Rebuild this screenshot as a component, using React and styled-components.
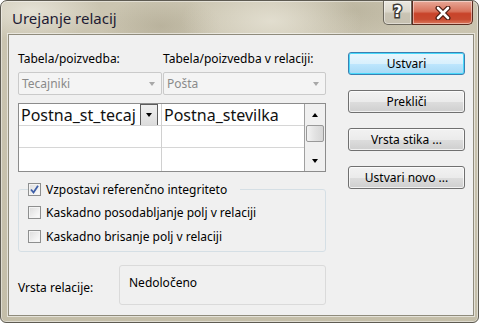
import React from "react";
import styled, { createGlobalStyle } from "styled-components";

const GlobalStyle = createGlobalStyle`
  html, body {
    margin: 0;
    padding: 0;
    background: #ffffff;
  }
  * {
    box-sizing: border-box;
  }
`;

const UI_FONT = `"Noto Sans", "Open Sans", sans-serif`;

const Window = styled.div`
  width: 479px;
  height: 323px;
  border: 1px solid #5e5b52;
  border-radius: 7px 7px 6px 6px;
  background:
    radial-gradient(ellipse 70px 30px at 30px 10px, rgba(232, 229, 218, 0.9), transparent),
    radial-gradient(ellipse 90px 40px at 270px 20px, rgba(228, 224, 210, 0.9), transparent),
    radial-gradient(ellipse 60px 30px at 160px 25px, rgba(160, 152, 128, 0.4), transparent),
    radial-gradient(ellipse 80px 30px at 350px 10px, rgba(165, 158, 134, 0.4), transparent),
    linear-gradient(#cbc5b1, #c4bea9);
  box-shadow: inset 0 0 0 1px rgba(255, 255, 255, 0.45);
  display: flex;
  flex-direction: column;
  font-family: ${UI_FONT};
  overflow: hidden;
`;

const TitleBar = styled.div`
  height: 33px;
  display: flex;
  justify-content: space-between;
  align-items: flex-start;
  padding-left: 11px;
`;

const Title = styled.div`
  margin-top: 7px;
  font-size: 15px;
  line-height: 20px;
  color: #1d1a33;
`;

const CaptionButtons = styled.div`
  display: flex;
  margin-right: 5px;
`;

const CaptionButton = styled.div`
  width: ${(p) => p.$w}px;
  height: 24px;
  display: flex;
  align-items: center;
  justify-content: center;
  border: 1px solid ${(p) => (p.$close ? "#5b2a1e" : "#6b675c")};
  border-top: none;
  border-radius: ${(p) => (p.$close ? "0 0 5px 0" : "0 0 0 5px")};
  background: ${(p) =>
    p.$close
      ? "linear-gradient(#e8a897 0%, #d8735c 45%, #c8432a 55%, #c84a30 80%, #dc7a5e 100%)"
      : "linear-gradient(#ebe8df 0%, #dcd8cc 45%, #c9c4b4 55%, #c6c0b0 100%)"};
  box-shadow: inset 0 0 0 1px rgba(255, 255, 255, 0.45);
`;

const HelpGlyph = styled.span`
  font-family: "DejaVu Sans", sans-serif;
  font-weight: bold;
  font-size: 15px;
  line-height: 15px;
  color: #ffffff;
  -webkit-text-stroke: 3px #3d3b36;
  paint-order: stroke fill;
`;

const Client = styled.div`
  margin: 0 4px 0 7px;
  height: 282px;
  border: 1px solid #8f8b7c;
  box-shadow: 0 0 0 1px rgba(255, 255, 255, 0.55);
  background: #f0f0f0;
  display: flex;
  padding: 16px 8px 0 9px;
`;

const LeftColumn = styled.div`
  width: 308px;
  display: flex;
  flex-direction: column;
`;

const LabelRow = styled.div`
  display: flex;
  height: 16px;
`;

const FieldLabel = styled.div`
  width: ${(p) => (p.$w ? `${p.$w}px` : "auto")};
  font-size: 12px;
  line-height: 16px;
  color: #000;
  white-space: nowrap;
`;

const ComboRow = styled.div`
  display: flex;
  gap: 1px;
  margin-top: 5px;
`;

const Combo = styled.div`
  width: ${(p) => p.$w}px;
  height: 23px;
  border: 1px solid #cacaca;
  border-radius: 2px;
  background: #f4f4f4;
  display: flex;
  align-items: center;
  justify-content: space-between;
  padding: 0 6px 0 3px;
  font-size: 12px;
  color: #8a8a8a;
`;

const Arrow = styled.span`
  width: 0;
  height: 0;
  border-left: 3.5px solid transparent;
  border-right: 3.5px solid transparent;
  border-${(p) => (p.$up ? "bottom" : "top")}: 4px solid ${(p) => p.$color || "#000"};
`;

const Grid = styled.div`
  margin-top: 8px;
  height: 69px;
  border: 1px solid #8c8c8c;
  background: #fff;
  display: flex;
`;

const GridColumn = styled.div`
  display: flex;
  flex-direction: column;
  border-right: 1px solid ${(p) => (p.$last ? "#a0a0a0" : "#d0d0d0")};
  flex: 0 0 143px;
`;

const GridCell = styled.div`
  height: ${(p) => (p.$fill ? "auto" : "22px")};
  flex: ${(p) => (p.$fill ? 1 : "none")};
  border-bottom: ${(p) => (p.$fill ? "none" : "1px solid #d6d6d6")};
  display: flex;
  align-items: center;
  justify-content: space-between;
  padding: 0 3px 0 2px;
  font-size: 16px;
  color: #111;
  white-space: nowrap;
  overflow: hidden;
`;

const CellDrop = styled.div`
  width: 18px;
  height: 22px;
  border: 1px solid #5c5c5c;
  background: linear-gradient(#efefef, #dcdcdc);
  display: flex;
  align-items: center;
  justify-content: center;
  flex: none;
`;

const ScrollBar = styled.div`
  flex: 1;
  background: #f0f0f0;
  display: flex;
  flex-direction: column;
  align-items: center;
  padding: 0 1px;
`;

const ScrollArrow = styled.div`
  height: 21px;
  width: 100%;
  display: flex;
  align-items: center;
  justify-content: center;
`;

const ScrollThumb = styled.div`
  width: 100%;
  height: 17px;
  border: 1px solid #999999;
  border-radius: 2px;
  background: linear-gradient(90deg, #f3f3f3, #e2e2e2 50%, #d6d6d6);
`;

const ScrollSpace = styled.div`
  flex: 1;
`;

const GroupBox = styled.fieldset`
  margin: 9px 0 0 0;
  border: 1px solid #d5dfe5;
  border-radius: 3px;
  padding: 7px 0 7px 9px;
  display: flex;
  flex-direction: column;
  gap: 8px;
`;

const Legend = styled.legend`
  padding: 0 13px 0 0;
`;

const CheckRow = styled.label`
  display: flex;
  align-items: center;
  gap: 5px;
  height: 16px;
  font-size: 12px;
  color: #000;
  white-space: nowrap;
`;

const CheckBox = styled.span`
  width: 13px;
  height: 13px;
  border: 1px solid #8e8f8f;
  background: linear-gradient(135deg, #dcdcdc, #fefefe);
  box-shadow: inset 0 0 0 1px #f4f4f4;
  display: flex;
  align-items: center;
  justify-content: center;
  flex: none;
`;

const RelationRow = styled.div`
  display: flex;
  align-items: center;
  margin-top: 13px;
`;

const RelationLabel = styled(FieldLabel)`
  width: 101px;
  padding-top: 5px;
`;

const RelationBox = styled.div`
  width: 207px;
  height: 40px;
  border: 1px solid #dadada;
  border-radius: 3px;
  padding: 9px 9px;
  font-size: 12px;
  line-height: 16px;
  color: #000;
`;

const ButtonColumn = styled.div`
  margin-left: 22px;
  margin-top: 1px;
  width: 117px;
  display: flex;
  flex-direction: column;
  gap: 15px;
`;

const Button = styled.div`
  height: 23px;
  border: 1px solid ${(p) => (p.$default ? "#3c7fb1" : "#707070")};
  border-radius: 3px;
  background: ${(p) =>
    p.$default
      ? "linear-gradient(#eaf6fd 0%, #d9f0fc 50%, #bee6fd 51%, #a7d9f5 100%)"
      : "linear-gradient(#f2f2f2 0%, #ebebeb 50%, #dddddd 51%, #cfcfcf 100%)"};
  box-shadow: inset 0 0 0 1px ${(p) => (p.$default ? "#48d9fb" : "rgba(255,255,255,0.7)")};
  display: flex;
  align-items: center;
  justify-content: center;
  font-size: 12px;
  color: #000;
`;

const App = () => {
  const buttons = ["Ustvari", "Prekliči", "Vrsta stika ...", "Ustvari novo ..."];
  const options = [
    { text: "Kaskadno posodabljanje polj v relaciji", checked: false },
    { text: "Kaskadno brisanje polj v relaciji", checked: false },
  ];

  return (
    <>
      <GlobalStyle />
      <Window>
        <TitleBar>
          <Title>Urejanje relacij</Title>
          <CaptionButtons>
            <CaptionButton $w={29}>
              <HelpGlyph>?</HelpGlyph>
            </CaptionButton>
            <CaptionButton $w={61} $close>
              <svg width="18" height="14" viewBox="0 0 18 14">
                <path
                  d="M4 2 L14 12 M14 2 L4 12"
                  stroke="#4a1c12"
                  strokeWidth="5"
                  strokeLinecap="round"
                />
                <path
                  d="M4 2 L14 12 M14 2 L4 12"
                  stroke="#ffffff"
                  strokeWidth="2.6"
                  strokeLinecap="round"
                />
              </svg>
            </CaptionButton>
          </CaptionButtons>
        </TitleBar>
        <Client>
          <LeftColumn>
            <LabelRow>
              <FieldLabel $w={145}>Tabela/poizvedba:</FieldLabel>
              <FieldLabel>Tabela/poizvedba v relaciji:</FieldLabel>
            </LabelRow>
            <ComboRow>
              <Combo $w={144}>
                Tecajniki
                <Arrow $color="#a8a8a8" />
              </Combo>
              <Combo $w={163}>
                Pošta
                <Arrow $color="#a8a8a8" />
              </Combo>
            </ComboRow>
            <Grid>
              <GridColumn>
                <GridCell>
                  Postna_st_tecaj
                  <CellDrop>
                    <Arrow />
                  </CellDrop>
                </GridCell>
                <GridCell />
                <GridCell $fill />
              </GridColumn>
              <GridColumn $last>
                <GridCell>Postna_stevilka</GridCell>
                <GridCell />
                <GridCell $fill />
              </GridColumn>
              <ScrollBar>
                <ScrollArrow>
                  <Arrow $up />
                </ScrollArrow>
                <ScrollThumb />
                <ScrollSpace />
                <ScrollArrow>
                  <Arrow />
                </ScrollArrow>
              </ScrollBar>
            </Grid>
            <GroupBox>
              <Legend>
                <CheckRow>
                  <CheckBox>
                    <svg width="9" height="9" viewBox="0 0 9 9">
                      <path
                        d="M1 4.5 L3.5 7.5 L8 0.8"
                        fill="none"
                        stroke="#3e5fa8"
                        strokeWidth="1.8"
                      />
                    </svg>
                  </CheckBox>
                  Vzpostavi referenčno integriteto
                </CheckRow>
              </Legend>
              {options.map((opt, idx) => (
                <CheckRow key={`opt-${idx}`}>
                  <CheckBox />
                  {opt.text}
                </CheckRow>
              ))}
            </GroupBox>
            <RelationRow>
              <RelationLabel>Vrsta relacije:</RelationLabel>
              <RelationBox>Nedoločeno</RelationBox>
            </RelationRow>
          </LeftColumn>
          <ButtonColumn>
            {buttons.map((b, idx) => (
              <Button key={`btn-${idx}`} $default={idx === 0}>
                {b}
              </Button>
            ))}
          </ButtonColumn>
        </Client>
      </Window>
    </>
  );
};

export default App;
